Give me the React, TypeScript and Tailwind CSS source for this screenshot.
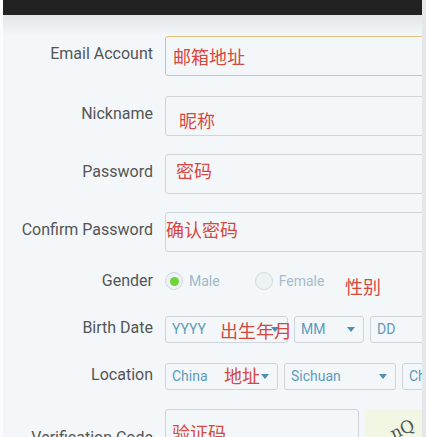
import { ChevronDown } from 'lucide-react';

const labelCls = 'w-[150px] shrink-0 text-right text-[16px] text-[#555] leading-none';
const inputCls = 'relative h-[40px] w-[262px] shrink-0 rounded-[3px] border border-[#cdd5db] bg-[#f3f7fa]';
const noteCls = 'text-[18px] text-[#d6483f] leading-none font-["Noto_Sans_CJK_SC",sans-serif]';

function Caret() {
  return <span className="ml-auto mr-2 h-0 w-0 border-x-[4px] border-t-[5px] border-x-transparent border-t-[#4f8db5]" />;
}

function Select({ text, w }: { text: string; w: string }) {
  return (
    <div className={`flex h-[27px] ${w} shrink-0 items-center rounded-[3px] border border-[#cdd5db] bg-[#f3f7fa] pl-[6px] text-[14px] text-[#5e9bb8]`}>
      {text}
      <Caret />
    </div>
  );
}

export default function App() {
  return (
    <div className="flex h-[437px] w-[426px] overflow-hidden bg-[#f3f7f9] font-['Roboto',sans-serif]">
      <div className="w-[3px] shrink-0 bg-[#fafcfd]" />
      <div className="relative flex-1 overflow-hidden">
        <div className="h-[15px] bg-[#222]" />
        <div className="h-[20px] bg-gradient-to-b from-[#e2e6e8] to-[#f3f7f9]" />

        <div className="flex flex-col">
          {/* email */}
          <div className="mt-[1px] flex items-center gap-[12px]">
            <div className={`${labelCls} pb-[5px]`}>Email Account</div>
            <div className={`${inputCls} !border-[#e3c27a] flex items-center pl-[7px]`}>
              <span className={noteCls}>邮箱地址</span>
            </div>
          </div>

          <div className="mt-[20px] flex items-center gap-[12px]">
            <div className={`${labelCls} pb-[5px]`}>Nickname</div>
            <div className={`${inputCls} flex items-center pl-[13px] pt-[8px]`}>
              <span className={noteCls}>昵称</span>
            </div>
          </div>

          <div className="mt-[18px] flex items-center gap-[12px]">
            <div className={`${labelCls} pb-[5px]`}>Password</div>
            <div className={`${inputCls} flex items-start pl-[10px] pt-[6px]`}>
              <span className={noteCls}>密码</span>
            </div>
          </div>

          <div className="mt-[18px] flex items-center gap-[12px]">
            <div className={`${labelCls} pb-[5px]`}>Confirm Password</div>
            <div className={`${inputCls} flex items-start pl-0 pt-[7px]`}>
              <span className={noteCls}>确认密码</span>
            </div>
          </div>

          {/* gender */}
          <div className="relative mt-[19px] flex h-[20px] items-center gap-[12px]">
            <div className={labelCls}>Gender</div>
            <div className="flex items-center text-[14px]">
              <span className="flex h-[18px] w-[18px] items-center justify-center rounded-full border border-[#d0d8dd] bg-[#edf2f5]">
                <span className="h-[9px] w-[9px] rounded-full bg-[#6fd43a]" />
              </span>
              <span className="ml-[6px] text-[#9fb9c8]">Male</span>
              <span className="ml-[35px] h-[18px] w-[18px] rounded-full border border-[#d0d8dd] bg-[#edf2f5]" />
              <span className="ml-[6px] text-[#a8bcc8]">Female</span>
            </div>
            <span className={`${noteCls} absolute left-[342px] top-[6px]`}>性别</span>
          </div>

          {/* birth date */}
          <div className="relative mt-[25px] flex items-center gap-[12px]">
            <div className={`${labelCls} pb-[3px]`}>Birth Date</div>
            <div className="flex gap-[6px]">
              <Select text="YYYY" w="w-[123px]" />
              <Select text="MM" w="w-[70px]" />
              <Select text="DD" w="w-[70px]" />
            </div>
            <span className={`${noteCls} absolute left-[217px] top-[5px]`}>出生年月</span>
          </div>

          {/* location */}
          <div className="relative mt-[20px] flex items-center gap-[12px]">
            <div className={`${labelCls} pb-[3px]`}>Location</div>
            <div className="flex gap-[6px]">
              <Select text="China" w="w-[113px]" />
              <Select text="Sichuan" w="w-[112px]" />
              <Select text="Chengdu" w="w-[100px]" />
            </div>
            <span className={`${noteCls} absolute left-[221px] top-[3px]`}>地址</span>
          </div>

          {/* verification */}
          <div className="mt-[19px] flex items-start gap-[12px]">
            <div className={`${labelCls} pt-[21px]`}>Verification Code</div>
            <div className="h-[40px] w-[194px] shrink-0 rounded-[3px] border border-[#cdd5db] bg-[#f3f7fa] pl-[6px] pt-[13px]">
              <span className={noteCls}>验证码</span>
            </div>
            <div className="relative -ml-[6px] h-[40px] w-[70px] shrink-0 bg-[#f1f7e3]">
              <span className="absolute left-[25px] top-[8px] -rotate-[25deg] font-['DejaVu_Serif',serif] text-[17px] text-[#4b5a5a]">nQ</span>
            </div>
          </div>
        </div>
      </div>
      <div className="w-[4px] shrink-0 bg-[#e4e7e9]" />
    </div>
  );
}
